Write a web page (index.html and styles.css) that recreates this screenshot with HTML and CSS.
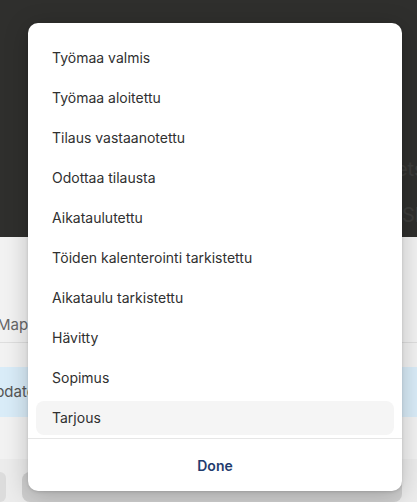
FILE: index.html
```html
<!DOCTYPE html>
<html lang="fi">
<head>
<meta charset="utf-8">
<title>Tila</title>
<link rel="stylesheet" href="styles.css">
</head>
<body>
<div class="page">
  <div class="dark">
    <div class="dark-row first">Assets</div>
    <div class="dark-row second">Shared</div>
  </div>
  <div class="light">
    <div class="map-row"><span class="clip">Map (</span></div>
    <div class="rule"></div>
    <div class="blue-row"><span class="clip">Update</span></div>
    <div class="spacer"></div>
    <div class="bottom-bar">
      <div class="chip small"></div>
      <div class="chip wide"></div>
    </div>
  </div>
</div>

<div class="sheet">
  <ul class="options">
    <li class="option">Työmaa valmis</li>
    <li class="option">Työmaa aloitettu</li>
    <li class="option">Tilaus vastaanotettu</li>
    <li class="option">Odottaa tilausta</li>
    <li class="option">Aikataulutettu</li>
    <li class="option">Töiden kalenterointi tarkistettu</li>
    <li class="option">Aikataulu tarkistettu</li>
    <li class="option">Hävitty</li>
    <li class="option">Sopimus</li>
    <li class="option selected">Tarjous</li>
  </ul>
  <div class="footer">
    <button class="done">Done</button>
  </div>
</div>
</body>
</html>
```

FILE: styles.css
```css
* { box-sizing: border-box; }

html, body {
  margin: 0;
  padding: 0;
}

body {
  width: 417px;
  height: 502px;
  overflow: hidden;
  font-family: Inter, "Noto Sans", "Liberation Sans", sans-serif;
  position: relative;
  background: #f1f1f1;
}

.page {
  display: flex;
  flex-direction: column;
  height: 502px;
}

.dark {
  height: 237px;
  background: #2f2f2d;
  padding-top: 157px;
  display: flex;
  flex-direction: column;
  gap: 22px;
  overflow: hidden;
}

.dark-row {
  white-space: nowrap;
  color: #3d3d3b;
  font-size: 20px;
  line-height: 24px;
}

.dark-row.first { padding-left: 361px; }
.dark-row.second { padding-left: 402px; }

.light {
  flex: 1;
  display: flex;
  flex-direction: column;
  background: #f2f2f2;
  overflow: hidden;
}

.clip {
  display: block;
  width: 28px;
  overflow: hidden;
  white-space: nowrap;
}

.map-row {
  margin-top: 76px;
  height: 36px;
  line-height: 24px;
  font-size: 15px;
  color: #666;
}

.map-row .clip { text-indent: -3px; }

.rule {
  height: 1px;
  background: #dedede;
}

.blue-row {
  margin-top: 24px;
  height: 50px;
  line-height: 50px;
  background: #d9ecf8;
  font-size: 15px;
  color: #555;
}

.blue-row .clip { text-indent: -16px; }

.spacer {
  height: 52px;
}

.bottom-bar {
  flex: 1;
  background: #ececec;
  display: flex;
  gap: 16px;
  padding-top: 13px;
}

.chip {
  height: 30px;
  border-radius: 8px;
  background: #dcdcdc;
}

.chip.small { width: 12px; margin-left: -6px; }
.chip.wide { flex: 1; margin-right: 15px; background: #cfcfcf; }

.sheet {
  position: absolute;
  left: 28px;
  top: 23px;
  width: 374px;
  height: 468px;
  background: #ffffff;
  border-radius: 10px;
  box-shadow: 0 4px 24px rgba(0, 0, 0, 0.22), 0 1px 3px rgba(0, 0, 0, 0.12);
  display: flex;
  flex-direction: column;
  overflow: hidden;
}

.options {
  list-style: none;
  margin: 0;
  padding: 15px 0 0;
  display: flex;
  flex-direction: column;
}

.option {
  margin: 3px 8px;
  height: 34px;
  line-height: 34px;
  padding: 0 16px;
  border-radius: 8px;
  font-size: 14px;
  color: #303030;
}

.option.selected {
  background: #f5f5f5;
}

.footer {
  border-top: 1px solid #e6e6e6;
  flex: 1;
  display: flex;
  align-items: center;
  justify-content: center;
}

.done {
  border: none;
  background: none;
  font-family: inherit;
  font-size: 14px;
  font-weight: 600;
  color: #1f3c6e;
  padding: 0;
  margin-top: 1px;
}
```
